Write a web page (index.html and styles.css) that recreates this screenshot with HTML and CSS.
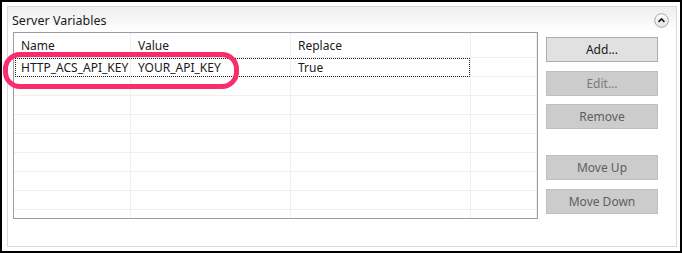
FILE: index.html
```html
<!DOCTYPE html>
<html lang="en">
<head>
  <meta charset="UTF-8">
  <title>Server Variables</title>
  <link rel="stylesheet" href="styles.css">
</head>
<body>
  <div class="frame">
    <div class="panel">
      <div class="panel-head">
        <span class="panel-title">Server Variables</span>
        <svg class="collapse" width="15" height="15" viewBox="0 0 15 15">
          <defs>
            <linearGradient id="cg" x1="0" y1="0" x2="0" y2="1">
              <stop offset="0" stop-color="#ffffff"/>
              <stop offset="1" stop-color="#e4e4e4"/>
            </linearGradient>
          </defs>
          <circle cx="7.5" cy="7.5" r="6.8" fill="url(#cg)" stroke="#a8a8a8" stroke-width="1"/>
          <polyline points="4.6,8.8 7.5,5.9 10.4,8.8" fill="none" stroke="#1c1c1c" stroke-width="1.7"/>
        </svg>
      </div>

      <div class="panel-body">
        <div class="grid">
          <div class="row head">
            <div class="cell">Name</div>
            <div class="cell">Value</div>
            <div class="cell">Replace</div>
            <div class="cell"></div>
          </div>
          <div class="row focused">
            <div class="cell">HTTP_ACS_API_KEY</div>
            <div class="cell">YOUR_API_KEY</div>
            <div class="cell">True</div>
            <div class="cell"></div>
          </div>
          <div class="row"><div class="cell"></div><div class="cell"></div><div class="cell"></div><div class="cell"></div></div>
          <div class="row"><div class="cell"></div><div class="cell"></div><div class="cell"></div><div class="cell"></div></div>
          <div class="row"><div class="cell"></div><div class="cell"></div><div class="cell"></div><div class="cell"></div></div>
          <div class="row"><div class="cell"></div><div class="cell"></div><div class="cell"></div><div class="cell"></div></div>
          <div class="row"><div class="cell"></div><div class="cell"></div><div class="cell"></div><div class="cell"></div></div>
          <div class="row"><div class="cell"></div><div class="cell"></div><div class="cell"></div><div class="cell"></div></div>
          <div class="row"><div class="cell"></div><div class="cell"></div><div class="cell"></div><div class="cell"></div></div>
          <div class="row"><div class="cell"></div><div class="cell"></div><div class="cell"></div><div class="cell"></div></div>
        </div>

        <div class="buttons">
          <button class="btn">Add...</button>
          <button class="btn edit" disabled>Edit...</button>
          <button class="btn remove" disabled>Remove</button>
          <button class="btn move-up" disabled>Move Up</button>
          <button class="btn move-down" disabled>Move Down</button>
        </div>
      </div>
    </div>

    <div class="highlight"></div>
  </div>
</body>
</html>
```

FILE: styles.css
```css
body {
  margin: 0;
  font-family: 'Noto Sans', sans-serif;
  font-size: 12px;
  color: #1a1a1a;
  background: #fff;
}

.frame {
  position: relative;
  width: 682px;
  height: 253px;
  box-sizing: border-box;
  border: 2px solid #000;
  padding: 4px 3px 4px 5px;
  background: #fff;
}

.panel {
  height: 241px;
  box-sizing: border-box;
  border: 1px solid #dadada;
  display: flex;
  flex-direction: column;
}

.panel-head {
  height: 25px;
  display: flex;
  align-items: center;
  justify-content: space-between;
  padding: 0 7px 0 4px;
  background: linear-gradient(#eeeeee, #ffffff);
}

.panel-title {
  margin-top: 1px;
  font-size: 12.5px;
}

.collapse {
  margin-top: 2px;
}

.panel-body {
  display: flex;
  padding-left: 5px;
}

.grid {
  width: 525px;
  height: 187px;
  box-sizing: border-box;
  border: 1px solid #9c9ca6;
  overflow: hidden;
}

.row {
  position: relative;
  display: grid;
  grid-template-columns: 117px 160px 180px 66px;
  height: 19px;
}

.row.head {
  height: 25px;
}

.cell {
  box-sizing: border-box;
  border-right: 1px solid #efefef;
  border-bottom: 1px solid #efefef;
  padding: 1px 0 0 7px;
  line-height: 17px;
  white-space: nowrap;
  overflow: hidden;
}

.row.head .cell {
  line-height: 23px;
}

.row.focused::after {
  content: "";
  position: absolute;
  left: 1px;
  top: 0;
  width: 455px;
  height: 19px;
  box-sizing: border-box;
  border: 1px dotted #222;
}

.buttons {
  display: flex;
  flex-direction: column;
  gap: 8px;
  margin: 5px 0 0 8px;
}

.btn {
  width: 112px;
  height: 25px;
  box-sizing: border-box;
  border: 1px solid #adadad;
  background: #e1e1e1;
  font-family: inherit;
  font-size: 12px;
  color: #1a1a1a;
  padding: 0;
}

.btn:disabled {
  background: #cccccc;
  border-color: #bfbfbf;
  color: #5e5e5e;
}

.btn.edit {
  margin-top: 1px;
  color: #7a7a7a;
}

.btn.move-up {
  margin-top: 18px;
}

.btn.move-down {
  margin-top: 1px;
}

.highlight {
  position: absolute;
  left: 1px;
  top: 50px;
  width: 236px;
  height: 37px;
  border: 5px solid #f92d6c;
  border-radius: 17px;
  box-sizing: border-box;
  pointer-events: none;
}
```
